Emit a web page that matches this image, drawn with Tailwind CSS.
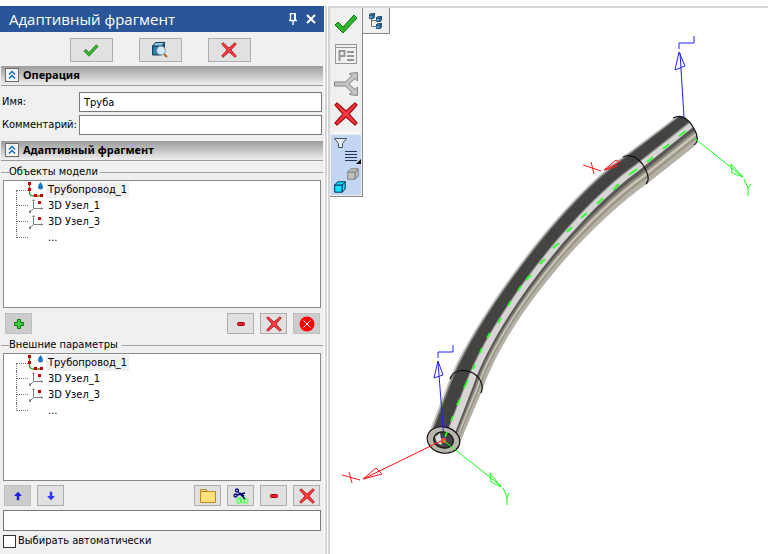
<!DOCTYPE html>
<html lang="ru">
<head>
    <meta charset="UTF-8">
    <title>Адаптивный фрагмент</title>
    <meta name="viewport" content="width=device-width, initial-scale=1.0">
    <script src="https://cdn.jsdelivr.net/npm/@tailwindcss/browser@4"></script>
</head>
<body class="bg-white font-['DejaVu_Sans_Condensed','DejaVu_Sans',sans-serif] text-[11px] leading-4 text-black">

    <!-- shared icons -->
    <svg class="hidden">
        <symbol id="i-check" viewBox="0 0 24 20">
            <path d="M1 11l3-3 5 5L20 1l3 3-14 15z" fill="#2fb52a" stroke="#13730f" stroke-linejoin="round"/>
        </symbol>
        <symbol id="i-cross" viewBox="0 0 24 24">
            <path d="M1 3l2-2 9 8 9-8 2 2-8 9 8 9-2 2-9-8-9 8-2-2 8-9z" fill="#fb3b3f" stroke="#a80d12" stroke-width="1.2" stroke-linejoin="round"/>
        </symbol>
        <symbol id="i-minus" viewBox="0 0 8 4">
            <rect x=".5" y=".5" width="7" height="3" rx="1" fill="#ee1c25" stroke="#9c0a10"/>
        </symbol>
        <symbol id="i-up" viewBox="0 0 14 14">
            <path d="M7 2l4 4v1H8.500v5h-3V7H3V6z"/>
        </symbol>
        <symbol id="i-collapse" viewBox="0 0 14 14">
            <rect x=".5" y=".5" width="13" height="13" fill="#f4f4f4" stroke="#6a6a6a"/>
            <path d="M4 6.5l3-3 3 3M4 10.5l3-3 3 3" fill="none" stroke="#0d64b8" stroke-width="1.4"/>
        </symbol>
        <symbol id="i-pipe" viewBox="0 0 16 16">
            <path d="M1.500 2v8q0 4 4 4H14" fill="none" stroke="#22a522" stroke-width="1.3"/>
            <path d="M0 0h3v3H0zM0 6h3v3H0zM6 12h3v3H6zM12 12h3v3h-3z" fill="#c00000"/>
            <path d="M12.500 0q2.500 3 2.500 5a2.500 2.500 0 0 1-5 0q0-2 2.500-5z" fill="#1e78c0"/>
        </symbol>
        <symbol id="i-node" viewBox="0 0 16 16">
            <path d="M5.500 2v8.500H15M5.500 10.500l-4 4" fill="none" stroke="#808080"/>
            <path d="M4 3h3L5.500 1zM13 9v3l2-1.500zM1 12.500h2v2.500H1z" fill="#808080"/>
            <path d="M10 3h3v3h-3z" fill="#d00000"/>
        </symbol>
        <symbol id="i-cube" viewBox="0 0 12 12">
            <path d="M.7 4h7.500v7.200H.7z"/><path d="M.7 4l3-3.200h7.500L8.200 4zM8.200 4l3-3.200V8l-3 3.200z"/>
        </symbol>
    </svg>

    <div class="flex min-h-screen pt-1.5">

        <!-- command panel -->
        <form class="w-[324px] shrink-0 bg-[#f0f0f0]">
            <header class="flex h-[26px] items-center bg-[#2a5699] pr-2 pl-[9px] text-white">
                <h1 class="flex-1 font-['Open_Sans','Noto_Sans',sans-serif] text-[15px]">Адаптивный фрагмент</h1>
                <button type="button" aria-label="Закрепить" class="mr-2">
                    <svg class="h-3 w-2.5" viewBox="0 0 10 12" fill="none" stroke="white"><path d="M2.500 7V.5h5M1 7.500h8" stroke-width="1.400"/><path d="M7 0v7" stroke-width="2"/><path d="M5 8v4" stroke-width="1.400"/></svg>
                </button>
                <button type="button" aria-label="Закрыть">
                    <svg class="size-2.5" viewBox="0 0 10 10" stroke="white" stroke-width="2"><path d="M1 1l8 8M9 1l-8 8"/></svg>
                </button>
            </header>

            <div class="flex justify-center gap-[26px] pt-1.5 pr-1 pb-1">
                <button type="button" aria-label="ОК" class="flex h-6 w-[43px] items-center justify-center border border-[#adadad] bg-[#e1e1e1]">
                    <svg class="h-[13px] w-4"><use href="#i-check"/></svg>
                </button>
                <button type="button" aria-label="Просмотр" class="flex h-6 w-[43px] items-center justify-center border border-[#adadad] bg-[#e1e1e1]">
                    <svg class="size-4" viewBox="0 0 16 16">
                        <path d="M.5 4h9v9h-9z" fill="#2f7da5" stroke="#123f5c"/>
                        <path d="M.5 4l3-3.500h9.500L9.500 4z" fill="#8fc4de" stroke="#123f5c"/>
                        <path d="M9.500 4L13 .5V10l-3.500 3z" fill="#17465f"/>
                        <path d="M12 12l3 3" stroke="#b5651d" stroke-width="2.200"/>
                        <circle cx="9" cy="8.500" r="4.300" fill="#cfeafa" stroke="#8a9aa5"/>
                    </svg>
                </button>
                <button type="button" aria-label="Отмена" class="flex h-6 w-[43px] items-center justify-center border border-[#adadad] bg-[#e1e1e1]">
                    <svg class="size-4"><use href="#i-cross"/></svg>
                </button>
            </div>

            <section class="px-px">
                <h2 class="flex h-5 items-center gap-1 border-b border-[#9a9a9a] bg-linear-to-b from-[#9c9c9c] to-[#f0f0f0] pb-0.5 pl-1 font-['Noto_Sans',sans-serif] text-[11px] font-bold">
                    <svg class="size-3.5"><use href="#i-collapse"/></svg>Операция
                </h2>
                <div class="grid grid-cols-[77px_1fr] items-center gap-y-[3px] py-1.5 pr-px pl-px">
                    <label for="name">Имя:</label>
                    <input id="name" type="text" value="Труба" class="h-5 w-full min-w-0 border border-[#7a7a7a] bg-white px-1">
                    <label for="comment">Комментарий:</label>
                    <input id="comment" type="text" class="h-5 w-full min-w-0 border border-[#7a7a7a] bg-white px-1">
                </div>
            </section>

            <section class="px-px">
                <h2 class="flex h-5 items-center gap-1 border-b border-[#9a9a9a] bg-linear-to-b from-[#9c9c9c] to-[#f0f0f0] pb-0.5 pl-1 font-['Noto_Sans',sans-serif] text-[11px] font-bold">
                    <svg class="size-3.5"><use href="#i-collapse"/></svg>Адаптивный фрагмент
                </h2>

                <fieldset class="mt-[3px] border-t border-[#a0a0a0] px-0.5">
                    <legend class="ml-1.5 pr-0.5">Объекты модели</legend>
                    <div class="h-32 border border-[#828790] bg-white pt-px pl-3">
                        <ul>
                            <li class="flex h-4 items-center">
                                <span class="h-2 w-3 shrink-0 self-end border-t border-l border-dotted border-[#777]"></span>
                                <svg class="mr-0.5 size-4"><use href="#i-pipe"/></svg><span class="bg-[#f0f0f0] px-0.5">Трубопровод_1</span>
                            </li>
                            <li class="flex h-4 items-center">
                                <span class="h-4 w-3 shrink-0 border-l border-dotted border-[#777]"><span class="block h-2 border-b border-dotted border-[#777]"></span></span>
                                <svg class="mr-0.5 size-4"><use href="#i-node"/></svg><span class="px-0.5">3D Узел_1</span>
                            </li>
                            <li class="flex h-4 items-center">
                                <span class="h-4 w-3 shrink-0 border-l border-dotted border-[#777]"><span class="block h-2 border-b border-dotted border-[#777]"></span></span>
                                <svg class="mr-0.5 size-4"><use href="#i-node"/></svg><span class="px-0.5">3D Узел_3</span>
                            </li>
                            <li class="flex h-4 items-center">
                                <span class="h-2 w-3 shrink-0 self-start border-b border-l border-dotted border-[#777]"></span>
                                <span class="ml-[18px] px-0.5">...</span>
                            </li>
                        </ul>
                    </div>
                    <div class="flex gap-1.5 pt-[5px] pr-px pl-0.5">
                        <button type="button" aria-label="Добавить" class="mr-auto flex h-[21px] w-[27px] items-center justify-center border border-[#bfbfbf] bg-[#cccccc]">
                            <svg class="size-2.5" viewBox="0 0 10 10"><path d="M3.500.5h3v3h3v3h-3v3h-3v-3h-3v-3h3z" fill="#3fd03f" stroke="#0b7a0b"/></svg>
                        </button>
                        <button type="button" aria-label="Удалить" class="flex h-[21px] w-[27px] items-center justify-center border border-[#adadad] bg-[#e1e1e1]">
                            <svg class="h-1 w-2"><use href="#i-minus"/></svg>
                        </button>
                        <button type="button" aria-label="Удалить все" class="flex h-[21px] w-[27px] items-center justify-center border border-[#adadad] bg-[#e1e1e1]">
                            <svg class="size-4"><use href="#i-cross"/></svg>
                        </button>
                        <button type="button" aria-label="Очистить" class="flex h-[21px] w-[27px] items-center justify-center border border-[#bfbfbf] bg-[#cccccc]">
                            <svg class="size-4" viewBox="0 0 16 16"><circle cx="8" cy="8" r="7.500" fill="red"/><path d="M4.500 4.500l7 7M11.500 4.500l-7 7" stroke="white"/></svg>
                        </button>
                    </div>
                </fieldset>

                <fieldset class="mt-[3px] border-t border-[#a0a0a0] px-0.5">
                    <legend class="ml-1.5 pr-1">Внешние параметры</legend>
                    <div class="h-32 border border-[#828790] bg-white pt-px pl-3">
                        <ul>
                            <li class="flex h-4 items-center">
                                <span class="h-2 w-3 shrink-0 self-end border-t border-l border-dotted border-[#777]"></span>
                                <svg class="mr-0.5 size-4"><use href="#i-pipe"/></svg><span class="bg-[#f0f0f0] px-0.5">Трубопровод_1</span>
                            </li>
                            <li class="flex h-4 items-center">
                                <span class="h-4 w-3 shrink-0 border-l border-dotted border-[#777]"><span class="block h-2 border-b border-dotted border-[#777]"></span></span>
                                <svg class="mr-0.5 size-4"><use href="#i-node"/></svg><span class="px-0.5">3D Узел_1</span>
                            </li>
                            <li class="flex h-4 items-center">
                                <span class="h-4 w-3 shrink-0 border-l border-dotted border-[#777]"><span class="block h-2 border-b border-dotted border-[#777]"></span></span>
                                <svg class="mr-0.5 size-4"><use href="#i-node"/></svg><span class="px-0.5">3D Узел_3</span>
                            </li>
                            <li class="flex h-4 items-center">
                                <span class="h-2 w-3 shrink-0 self-start border-b border-l border-dotted border-[#777]"></span>
                                <span class="ml-[18px] px-0.5">...</span>
                            </li>
                        </ul>
                    </div>
                    <div class="flex gap-1.5 pt-1 pr-px pl-px">
                        <button type="button" aria-label="Вверх" class="flex h-[21px] w-[27px] items-center justify-center border border-[#bfbfbf] bg-[#cccccc]">
                            <svg class="size-3 fill-[#2020e0]"><use href="#i-up"/></svg>
                        </button>
                        <button type="button" aria-label="Вниз" class="mr-auto flex h-[21px] w-[27px] items-center justify-center border border-[#adadad] bg-[#e1e1e1]">
                            <svg class="size-3 rotate-180 fill-[#3434ff]"><use href="#i-up"/></svg>
                        </button>
                        <button type="button" aria-label="Папка" class="flex h-[21px] w-[27px] items-center justify-center border border-[#adadad] bg-[#e1e1e1]">
                            <svg class="h-3.5 w-4" viewBox="0 0 16 14"><path d="M.5 2.500v11h15v-11h-9v-2h-6z" fill="#ffe27a" stroke="#b8862b"/><path d="M1 2.500h6" stroke="#b8862b"/></svg>
                        </button>
                        <button type="button" aria-label="Вырезать" class="flex h-[21px] w-[27px] items-center justify-center border border-[#adadad] bg-[#e1e1e1]">
                            <svg class="size-4" viewBox="0 0 16 16" fill="none">
                                <g stroke="#66ff66" stroke-width="1.600"><circle cx="6" cy="13" r="2"/><path d="M8.500 10v5.500M4 10h4M11 7.500v8"/><circle cx="13" cy="13" r="2"/></g>
                                <g stroke="#00007a" stroke-width="1.300"><circle cx="4" cy="2.500" r="1.500"/><circle cx="2.500" cy="7.500" r="1.500"/><path d="M5 4l7 7M4 7l8-2M7 5l4 3"/></g>
                            </svg>
                        </button>
                        <button type="button" aria-label="Удалить" class="flex h-[21px] w-[27px] items-center justify-center border border-[#adadad] bg-[#e1e1e1]">
                            <svg class="h-1 w-2"><use href="#i-minus"/></svg>
                        </button>
                        <button type="button" aria-label="Удалить все" class="flex h-[21px] w-[27px] items-center justify-center border border-[#adadad] bg-[#e1e1e1]">
                            <svg class="size-4"><use href="#i-cross"/></svg>
                        </button>
                    </div>
                    <input type="text" aria-label="Значение" class="mt-1 block h-[21px] w-full border border-[#7a7a7a] bg-white px-1">
                    <div class="flex items-center gap-0.5 pt-0.5">
                        <input id="auto" type="checkbox" class="size-[13px] appearance-none border border-[#333] bg-white checked:bg-[#333]">
                        <label for="auto">Выбирать автоматически</label>
                    </div>
                </fieldset>
            </section>
        </form>

        <div class="ml-px w-0.5 shrink-0 bg-[#d4d4d4]"></div>

        <!-- 3D view -->
        <main class="relative ml-px min-w-0 flex-1 border-t-2 border-l-2 border-[#d4d4d4] bg-white">
            <svg id="scene" class="block w-full" viewBox="330 8 438 546" fill="none">
                <clipPath id="pipe-end"><path d="M400 480V100h250l23 18c8-4 15 0 20 9 5 8 6 15 1 18v335z"/></clipPath>
                <g id="pipe" clip-path="url(#pipe-end)"></g>
                <path d="M604 170l16-8M604 170l12-10 4 2M604 170l14-4M583 165l18 6M591 162l3 12" stroke="#ff1414"/>
                <g stroke="#111" stroke-width="1.200">
                    <path d="M673 118c8-4 15 0 20 9 5 8 6 15 1 18"/>
                    <path d="M623 157c7-4 15 1 20 8 5 8 7 15 3 19"/>
                    <path d="M450 379c3-9 14-11 23-6 8 5 11 13 8 20"/>
                    <ellipse cx="443.500" cy="440" rx="16.500" ry="13" fill="#b9b5ab" transform="rotate(14 443.500 440)"/>
                    <ellipse cx="443.500" cy="440" rx="10" ry="8" fill="#444" transform="rotate(14 443.500 440)"/>
                </g>
                <path d="M435 437l5-4 2 12-5-2z" fill="#ddd"/>
                <path d="M445 437l2-5M451 421l2-5M457 405l3-6M464 388l4-8M473 369l2-5M480 353l2-5M487 338l3-5M498 323l3-5M508 306l3-5M518 291l3-5M526 280l5-5M540 264l5-5M553 248l6-5M567 232l5-5M581 218l6-5M597 204l6-6M613 190l6-6M629 175l8-6M647 162l6-5M663 149l6-5M679 136l7-5" stroke="#2bff2b" stroke-width="1.800"/>
                <g stroke="#2020ff">
                    <path d="M444 440l-6-78M438 361l-4 17 9-3zM438 358v-6h15v-7"/>
                    <path d="M684 117l-4-64M679 52l-4 18 10-4zM679 49v-6h15v-7"/>
                </g>
                <path d="M443 440l-80 39M363 479l13-11 6 6zM342 475l18 5M349 472l3 11" stroke="#ff1414"/>
                <path d="M441 438h5v5h-5z" fill="#ff4040"/>
                <g stroke="#14ff14">
                    <path d="M443 440l58 46M501 487l-11-14 1 9zM503 488l4 9v8M509 493l-2 5"/>
                    <path d="M694 138l49 39M743 177l-12-13 1 9zM744 179l4 9v8M751 184l-3 4"/>
                </g>
            </svg>

            <div class="absolute top-0 left-0 flex items-start">
                <div class="flex w-[33px] flex-col items-center border-r border-b border-[#888] bg-[#f0f0f0] px-px pb-px">
                    <button type="button" aria-label="Завершить" class="flex h-8 items-center"><svg class="h-5 w-6"><use href="#i-check"/></svg></button>
                    <button type="button" aria-label="Параметры" class="flex h-7 items-center">
                        <svg class="h-5 w-[22px]" viewBox="0 0 22 20" fill="none" stroke="#969696"><path d="M.5.5h21v19H.5zM1 3.500h20"/><path d="M4.500 17V7h5v5h-5M12 8h7M12 12h7M12 16h7" stroke-width="2"/></svg>
                    </button>
                    <button type="button" aria-label="Разветвление" class="flex h-8 items-center">
                        <svg class="size-6" viewBox="0 0 24 24"><path d="M.5 10h11l6-6-2-2.500 8-1V9L21 6.500 15 12l6 5.500 2.500-2.500v8.500l-8-1 2-2.500-6-6H.5z" fill="#c4c4c4" stroke="#858585"/></svg>
                    </button>
                    <button type="button" aria-label="Отменить" class="flex h-7 items-center"><svg class="size-6"><use href="#i-cross"/></svg></button>
                    <hr class="mt-1 mb-0.5 w-6 border-white">
                    <button type="button" aria-label="Фильтр" class="w-full bg-[#c2d5f2]">
                        <svg class="block h-[60px] w-full" viewBox="0 0 30 60">
                            <path d="M3.500 3.500h12l-4 5v4h-4v-4z" fill="#e6eef5" stroke="#45525c"/>
                            <path d="M14 16.500h12M14 19.500h12M14 22.500h12M14 25.500h12" stroke="#1f3550"/>
                            <path d="M30 24v5h-5z"/>
                            <use href="#i-cube" x="16" y="33" width="12" height="12" fill="#c0c0c0" stroke="#808080"/>
                            <use href="#i-cube" x="3" y="46" width="12" height="12" fill="#00e8ff" stroke="#00305c"/>
                        </svg>
                    </button>
                </div>
                <button type="button" aria-label="Дерево модели" class="flex h-[26px] w-[27px] items-center justify-center border-r border-b border-[#888] bg-[#f0f0f0]">
                    <svg class="size-4" viewBox="0 0 16 16">
                        <path d="M3.500 5v8.500H8M3.500 7.500H8" fill="none" stroke="#777"/>
                        <g fill="#5aa5dc" stroke="#0b3558" stroke-width="1.600">
                            <use href="#i-cube" x="1" y="0" width="6" height="6"/><use href="#i-cube" x="8" y="3" width="6" height="6"/><use href="#i-cube" x="8" y="10" width="6" height="6"/>
                        </g>
                    </svg>
                </button>
            </div>
        </main>
    </div>

    <script>
        // silhouette edges of the pipe: straight, cubic bend, straight (runs past the end, clipped by #pipe-end)
        const left = [[428, 435], [450, 378], [475, 318], [560, 200], [625, 155], [688, 108]];
        const right = [[459, 445], [482, 391], [506, 320], [584, 228], [648, 183], [710, 134]];

        // [from, to] across the pipe at the bottom end, then at the top end
        const bands = [
            [0, 1, 0, 1, '#b4b0a6'],
            [0, 0.06, 0, 0.04, '#cfcfcb'],
            [0.05, 0.12, 0.03, 0.08, '#777775'],
            [0.10, 0.52, 0.06, 0.40, '#444342'],
            [0.50, 0.56, 0.34, 0.40, '#8d8c8b'],
            [0.53, 0.76, 0.38, 0.54, '#d8d6d5'],
            [0.75, 0.81, 0.53, 0.65, '#5a5957'],
            [0.80, 0.84, 0.64, 0.70, '#8a867c'],
            [0.84, 0.88, 0.72, 0.78, '#c9c3b6'],
            [0.88, 0.92, 0.80, 0.86, '#9a9486']
        ];

        const edge = (f0, f1) => left.map((p, i) => {
            const f = f0 + (f1 - f0) * i / (left.length - 1);
            return [0, 1].map(k => (p[k] + (right[i][k] - p[k]) * f).toFixed(1)).join(' ');
        });

        const pipe = document.getElementById('pipe');
        bands.forEach(([a0, b0, a1, b1, color]) => {
            const a = edge(a0, a1);
            const b = edge(b0, b1).reverse();
            const path = document.createElementNS('http://www.w3.org/2000/svg', 'path');
            path.setAttribute('d', `M${a[0]}L${a[1]}C${a[2]} ${a[3]} ${a[4]}L${a[5]}L${b[0]}L${b[1]}C${b[2]} ${b[3]} ${b[4]}L${b[5]}z`);
            path.setAttribute('fill', color);
            pipe.appendChild(path);
        });
    </script>
</body>
</html>
